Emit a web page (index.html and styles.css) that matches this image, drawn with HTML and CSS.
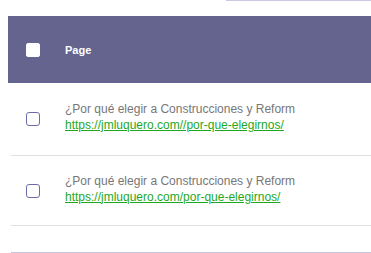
FILE: index.html
```html
<!DOCTYPE html>
<html lang="es">
<head>
<meta charset="utf-8">
<title>Páginas</title>
<link rel="stylesheet" href="styles.css">
</head>
<body>
  <div class="toolbar-edge"></div>
  <div class="page-table">
    <div class="head-row">
      <span class="check check-head"></span>
      <span class="head-label">Page</span>
    </div>
    <div class="row">
      <span class="check"></span>
      <div class="cell">
        <div class="title">¿Por qué elegir a Construcciones y Reform</div>
        <a class="url" href="#">https://jmluquero.com//por-que-elegirnos/</a>
      </div>
    </div>
    <div class="row row-compact">
      <span class="check"></span>
      <div class="cell">
        <div class="title">¿Por qué elegir a Construcciones y Reform</div>
        <a class="url" href="#">https://jmluquero.com/por-que-elegirnos/</a>
      </div>
    </div>
    <div class="table-foot"></div>
  </div>
</body>
</html>
```

FILE: styles.css
```css
html, body {
  margin: 0;
  padding: 0;
  background: #ffffff;
  font-family: "Liberation Sans", Arial, sans-serif;
}

.toolbar-edge {
  height: 1px;
  margin-left: 226px;
  background: #c9c9e4;
}

.page-table {
  margin: 15px 0 0 8px;
}

.head-row {
  display: flex;
  align-items: center;
  height: 67px;
  padding-left: 18px;
  background: #64648f;
}

.check {
  flex: none;
  box-sizing: border-box;
  width: 14px;
  height: 14px;
  border: 1px solid #6c6ca8;
  border-radius: 3px;
  background: #ffffff;
}

.check-head {
  border-color: #ffffff;
  border-radius: 2px;
  margin-top: 1px;
}

.head-label {
  margin-left: 25px;
  color: #ffffff;
  font-size: 11px;
  font-weight: bold;
}

.row {
  display: flex;
  align-items: center;
  height: 72px;
  margin-left: 3px;
  padding-left: 15px;
  border-bottom: 1px solid #e0e0e0;
}

.row-compact {
  height: 69px;
}

.cell {
  margin-left: 25px;
  font-size: 12px;
  line-height: 16px;
  margin-top: -4px;
}

.title {
  color: #777777;
}

.url {
  color: #1fa81f;
  text-decoration: underline;
}

.table-foot {
  height: 26px;
  margin-left: 3px;
  border-bottom: 1px solid #c3c6dc;
}
```
